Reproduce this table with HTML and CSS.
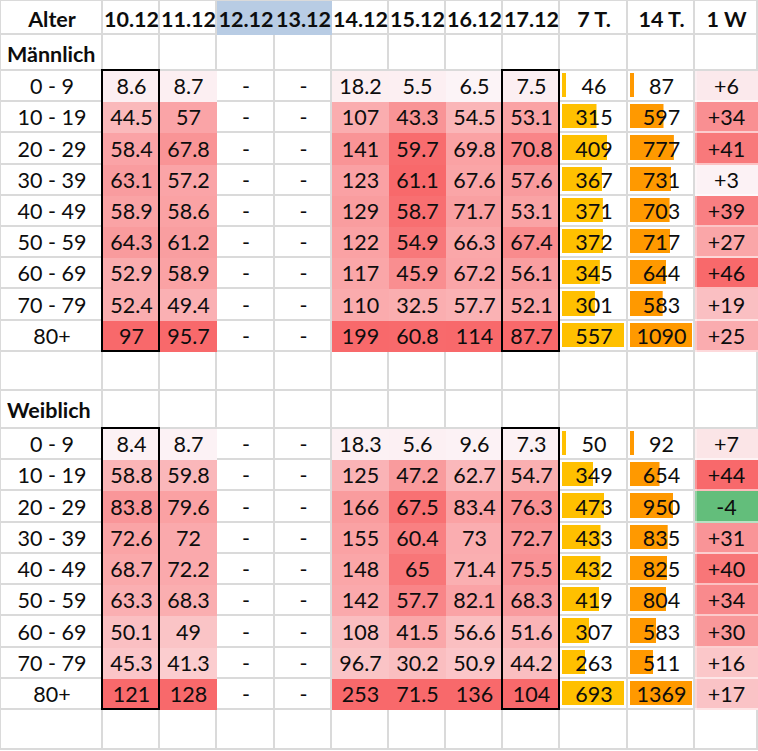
FILE: index.html
```html
<!DOCTYPE html>
<html lang="de">
<head>
<meta charset="utf-8">
<title>Inzidenz nach Alter</title>
<link rel="stylesheet" href="styles.css">
</head>
<body>
<div class="sheet">
  <div class="r">
    <div class="c hd">Alter</div><div class="c hd">10.12</div><div class="c hd">11.12</div><div class="c hd blue">12.12</div><div class="c hd blue">13.12</div><div class="c hd">14.12</div><div class="c hd">15.12</div><div class="c hd">16.12</div><div class="c hd">17.12</div><div class="c hd">7 T.</div><div class="c hd">14 T.</div><div class="c hd">1 W</div>
  </div>
  <div class="r">
    <div class="c lbl lm">Männlich</div><div class="c"></div><div class="c"></div><div class="c"></div><div class="c"></div><div class="c"></div><div class="c"></div><div class="c"></div><div class="c"></div><div class="c"></div><div class="c"></div><div class="c"></div>
  </div>
  <div class="r m">
    <div class="c">0 - 9</div><div class="c h bx bt">8.6</div><div class="c h">8.7</div><div class="c">-</div><div class="c">-</div><div class="c h">18.2</div><div class="c h">5.5</div><div class="c h">6.5</div><div class="c h bx bt">7.5</div><div class="c d7">46</div><div class="c d14">87</div><div class="c w">+6</div>
  </div>
  <div class="r m">
    <div class="c">10 - 19</div><div class="c h bx">44.5</div><div class="c h">57</div><div class="c">-</div><div class="c">-</div><div class="c h">107</div><div class="c h">43.3</div><div class="c h">54.5</div><div class="c h bx">53.1</div><div class="c d7">315</div><div class="c d14">597</div><div class="c w">+34</div>
  </div>
  <div class="r m">
    <div class="c">20 - 29</div><div class="c h bx">58.4</div><div class="c h">67.8</div><div class="c">-</div><div class="c">-</div><div class="c h">141</div><div class="c h">59.7</div><div class="c h">69.8</div><div class="c h bx">70.8</div><div class="c d7">409</div><div class="c d14">777</div><div class="c w">+41</div>
  </div>
  <div class="r m">
    <div class="c">30 - 39</div><div class="c h bx">63.1</div><div class="c h">57.2</div><div class="c">-</div><div class="c">-</div><div class="c h">123</div><div class="c h">61.1</div><div class="c h">67.6</div><div class="c h bx">57.6</div><div class="c d7">367</div><div class="c d14">731</div><div class="c w">+3</div>
  </div>
  <div class="r m">
    <div class="c">40 - 49</div><div class="c h bx">58.9</div><div class="c h">58.6</div><div class="c">-</div><div class="c">-</div><div class="c h">129</div><div class="c h">58.7</div><div class="c h">71.7</div><div class="c h bx">53.1</div><div class="c d7">371</div><div class="c d14">703</div><div class="c w">+39</div>
  </div>
  <div class="r m">
    <div class="c">50 - 59</div><div class="c h bx">64.3</div><div class="c h">61.2</div><div class="c">-</div><div class="c">-</div><div class="c h">122</div><div class="c h">54.9</div><div class="c h">66.3</div><div class="c h bx">67.4</div><div class="c d7">372</div><div class="c d14">717</div><div class="c w">+27</div>
  </div>
  <div class="r m">
    <div class="c">60 - 69</div><div class="c h bx">52.9</div><div class="c h">58.9</div><div class="c">-</div><div class="c">-</div><div class="c h">117</div><div class="c h">45.9</div><div class="c h">67.2</div><div class="c h bx">56.1</div><div class="c d7">345</div><div class="c d14">644</div><div class="c w">+46</div>
  </div>
  <div class="r m">
    <div class="c">70 - 79</div><div class="c h bx">52.4</div><div class="c h">49.4</div><div class="c">-</div><div class="c">-</div><div class="c h">110</div><div class="c h">32.5</div><div class="c h">57.7</div><div class="c h bx">52.1</div><div class="c d7">301</div><div class="c d14">583</div><div class="c w">+19</div>
  </div>
  <div class="r m">
    <div class="c">80+</div><div class="c h bx bb">97</div><div class="c h">95.7</div><div class="c">-</div><div class="c">-</div><div class="c h">199</div><div class="c h">60.8</div><div class="c h">114</div><div class="c h bx bb">87.7</div><div class="c d7">557</div><div class="c d14">1090</div><div class="c w">+25</div>
  </div>
  <div class="r">
    <div class="c"></div><div class="c"></div><div class="c"></div><div class="c"></div><div class="c"></div><div class="c"></div><div class="c"></div><div class="c"></div><div class="c"></div><div class="c"></div><div class="c"></div><div class="c"></div>
  </div>
  <div class="r">
    <div class="c lbl lw">Weiblich</div><div class="c"></div><div class="c"></div><div class="c"></div><div class="c"></div><div class="c"></div><div class="c"></div><div class="c"></div><div class="c"></div><div class="c"></div><div class="c"></div><div class="c"></div>
  </div>
  <div class="r f">
    <div class="c">0 - 9</div><div class="c h bx bt">8.4</div><div class="c h">8.7</div><div class="c">-</div><div class="c">-</div><div class="c h">18.3</div><div class="c h">5.6</div><div class="c h">9.6</div><div class="c h bx bt">7.3</div><div class="c d7">50</div><div class="c d14">92</div><div class="c w">+7</div>
  </div>
  <div class="r f">
    <div class="c">10 - 19</div><div class="c h bx">58.8</div><div class="c h">59.8</div><div class="c">-</div><div class="c">-</div><div class="c h">125</div><div class="c h">47.2</div><div class="c h">62.7</div><div class="c h bx">54.7</div><div class="c d7">349</div><div class="c d14">654</div><div class="c w">+44</div>
  </div>
  <div class="r f">
    <div class="c">20 - 29</div><div class="c h bx">83.8</div><div class="c h">79.6</div><div class="c">-</div><div class="c">-</div><div class="c h">166</div><div class="c h">67.5</div><div class="c h">83.4</div><div class="c h bx">76.3</div><div class="c d7">473</div><div class="c d14">950</div><div class="c w">-4</div>
  </div>
  <div class="r f">
    <div class="c">30 - 39</div><div class="c h bx">72.6</div><div class="c h">72</div><div class="c">-</div><div class="c">-</div><div class="c h">155</div><div class="c h">60.4</div><div class="c h">73</div><div class="c h bx">72.7</div><div class="c d7">433</div><div class="c d14">835</div><div class="c w">+31</div>
  </div>
  <div class="r f">
    <div class="c">40 - 49</div><div class="c h bx">68.7</div><div class="c h">72.2</div><div class="c">-</div><div class="c">-</div><div class="c h">148</div><div class="c h">65</div><div class="c h">71.4</div><div class="c h bx">75.5</div><div class="c d7">432</div><div class="c d14">825</div><div class="c w">+40</div>
  </div>
  <div class="r f">
    <div class="c">50 - 59</div><div class="c h bx">63.3</div><div class="c h">68.3</div><div class="c">-</div><div class="c">-</div><div class="c h">142</div><div class="c h">57.7</div><div class="c h">82.1</div><div class="c h bx">68.3</div><div class="c d7">419</div><div class="c d14">804</div><div class="c w">+34</div>
  </div>
  <div class="r f">
    <div class="c">60 - 69</div><div class="c h bx">50.1</div><div class="c h">49</div><div class="c">-</div><div class="c">-</div><div class="c h">108</div><div class="c h">41.5</div><div class="c h">56.6</div><div class="c h bx">51.6</div><div class="c d7">307</div><div class="c d14">583</div><div class="c w">+30</div>
  </div>
  <div class="r f">
    <div class="c">70 - 79</div><div class="c h bx">45.3</div><div class="c h">41.3</div><div class="c">-</div><div class="c">-</div><div class="c h">96.7</div><div class="c h">30.2</div><div class="c h">50.9</div><div class="c h bx">44.2</div><div class="c d7">263</div><div class="c d14">511</div><div class="c w">+16</div>
  </div>
  <div class="r f">
    <div class="c">80+</div><div class="c h bx bb">121</div><div class="c h">128</div><div class="c">-</div><div class="c">-</div><div class="c h">253</div><div class="c h">71.5</div><div class="c h">136</div><div class="c h bx bb">104</div><div class="c d7">693</div><div class="c d14">1369</div><div class="c w">+17</div>
  </div>
  <div class="r">
    <div class="c"></div><div class="c"></div><div class="c"></div><div class="c"></div><div class="c"></div><div class="c"></div><div class="c"></div><div class="c"></div><div class="c"></div><div class="c"></div><div class="c"></div><div class="c"></div>
  </div>
</div>
<script src="script.js"></script>
</body>
</html>
```
FILE: styles.css
```css
html, body {
  margin: 0;
  padding: 0;
  background: #fff;
  overflow: hidden;
}
body {
  font-family: Lato, "Open Sans", sans-serif;
  font-size: 21.5px;
  color: #0d0d0d;
}
.sheet {
  display: grid;
  grid-template-columns: 102px 57px 57px 58px 57px 57px 57px 57px 57px 68px 67px 63px;
  grid-template-rows: 34px 36px repeat(9, 31.2px) 39px 38px repeat(9, 31.3px) 40px;
  border-top: 1px solid #dadada;
  border-left: 1px solid #dadada;
  width: 757px;
}
.r {
  display: contents;
}
.c {
  position: relative;
  display: flex;
  align-items: flex-end;
  justify-content: center;
  padding-bottom: 3px;
  line-height: 25px;
  white-space: nowrap;
  min-width: 0;
  box-sizing: border-box;
  box-shadow: inset -2px -2px 0 #dadada;
}
.hd {
  font-weight: 700;
}
.blue {
  background: #b8cce4;
  box-shadow: none;
}
.lbl {
  justify-content: flex-start;
  padding-left: 6px;
  font-weight: 700;
}
.lm {
  padding-bottom: 4px;
}
.lw {
  padding-bottom: 6px;
}
.h {
  box-shadow: none;
}
.w {
  box-shadow: inset 0 -2px 0 rgba(255, 255, 255, 0.55), inset 2px 0 0 rgba(255, 255, 255, 0.3);
}
.d7 {
  background: linear-gradient(#ffc000, #ffc000) no-repeat 2px 2px / var(--w, 0px) calc(100% - 7px);
}
.d14 {
  background: linear-gradient(#ff9900, #ff9900) no-repeat 2px 2px / var(--w, 0px) calc(100% - 7px);
}
.bx::after {
  content: "";
  position: absolute;
  top: 0;
  bottom: 0;
  left: -2px;
  right: 0;
  border-left: 2px solid #000;
  border-right: 2px solid #000;
  pointer-events: none;
}
.bt::after {
  top: -2px;
  border-top: 2px solid #000;
}
.bb::after {
  border-bottom: 2px solid #000;
}
```
FILE: script.js
```js
(function () {
  var W = [252, 252, 255], R = [248, 105, 107], G = [99, 190, 123];
  function mix(a, b, t) {
    t = Math.max(0, Math.min(1, t));
    return 'rgb(' + a.map(function (x, i) { return Math.round(x + (b[i] - x) * t); }).join(',') + ')';
  }
  ['m', 'f'].forEach(function (blk) {
    var rows = Array.prototype.slice.call(document.querySelectorAll('.r.' + blk));
    for (var c = 1; c < 12; c++) {
      var cells = rows.map(function (r) { return r.children[c]; });
      var vals = cells.map(function (e) { return parseFloat(e.textContent); });
      if (vals.some(isNaN)) continue;
      var max = Math.max.apply(null, vals), min = Math.min.apply(null, vals);
      cells.forEach(function (e, i) {
        var v = vals[i];
        if (c <= 8) {
          e.style.backgroundColor = mix(W, R, v / max);
        } else if (c === 11) {
          e.style.backgroundColor = v < 0 ? mix(W, G, v / min) : mix(W, R, v / max);
        } else {
          e.style.setProperty('--w', (4 + (v - min) / (max - min) * 58).toFixed(1) + 'px');
        }
      });
    }
  });
})();
```
